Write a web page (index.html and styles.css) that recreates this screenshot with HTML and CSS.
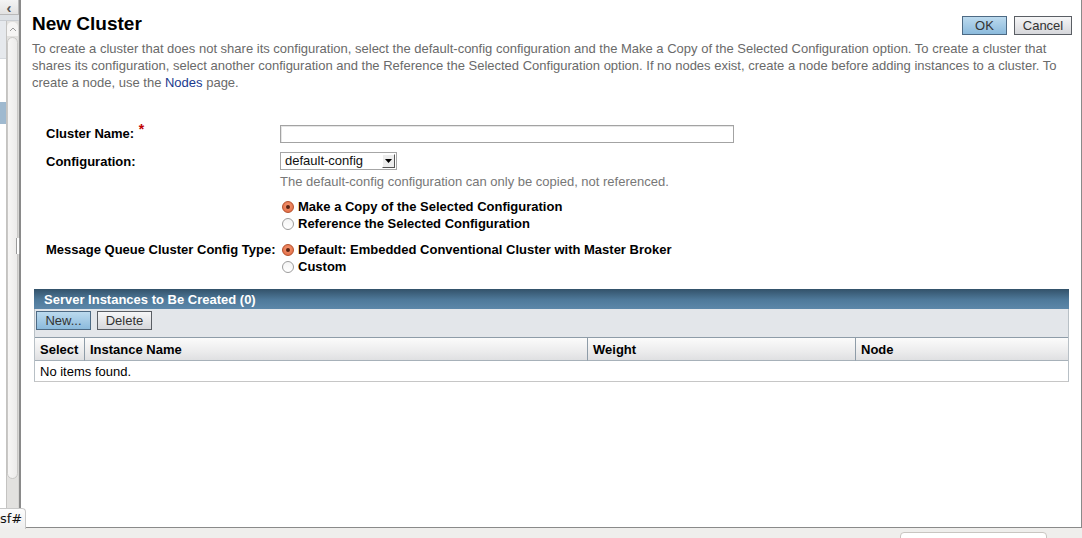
FILE: index.html
```html
<!DOCTYPE html>
<html>
<head>
<meta charset="utf-8">
<title>New Cluster</title>
<link rel="stylesheet" href="styles.css">
</head>
<body>
<div class="app">
  <div class="workspace">
    <aside class="sidebar">
      <div class="side-main">
        <div class="collapse-bar"><span class="collapse-btn">&#8249;</span></div>
        <div class="side-body">
          <div class="side-panel">
            <div class="tree-head"></div>
            <div class="tree-sel"></div>
          </div>
          <div class="scrollbar">
            <div class="scroll-up">
              <svg width="8" height="5" viewBox="0 0 8 5"><path d="M1 4 L4 1 L7 4" fill="none" stroke="#9a9a9a" stroke-width="1"/></svg>
            </div>
            <div class="scroll-thumb"></div>
          </div>
        </div>
      </div>
      <div class="splitter"><div class="grip"></div></div>
    </aside>

    <main class="page">
      <div class="title-row">
        <h1 class="title">New Cluster</h1>
        <div class="actions">
          <button class="btn btn-primary btn-ok">OK</button>
          <button class="btn btn-secondary btn-cancel">Cancel</button>
        </div>
      </div>
      <p class="desc">To create a cluster that does not share its configuration, select the default-config configuration and the Make a Copy of the Selected Configuration option. To create a cluster that shares its configuration, select another configuration and the Reference the Selected Configuration option. If no nodes exist, create a node before adding instances to a cluster. To create a node, use the <a class="link" href="#">Nodes</a> page.</p>

      <div class="form">
        <div class="label">Cluster Name: <span class="req">*</span></div>
        <div class="field"><div class="text-input"></div></div>

        <div class="label label-config">Configuration:</div>
        <div class="field">
          <div class="select">
            <span class="select-text">default-config</span>
            <span class="select-arrow"><svg width="7" height="4" viewBox="0 0 7 4"><path d="M0 0 H7 L3.5 4 Z" fill="#000"/></svg></span>
          </div>
          <div class="help">The default-config configuration can only be copied, not referenced.</div>
          <div class="radio-group copy-group">
            <div class="radio-row"><span class="radio checked"></span>Make a Copy of the Selected Configuration</div>
            <div class="radio-row"><span class="radio"></span>Reference the Selected Configuration</div>
          </div>
        </div>

        <div class="label label-mq">Message Queue Cluster Config Type:</div>
        <div class="field field-mq">
          <div class="radio-group">
            <div class="radio-row"><span class="radio checked"></span>Default: Embedded Conventional Cluster with Master Broker</div>
            <div class="radio-row"><span class="radio"></span>Custom</div>
          </div>
        </div>
      </div>

      <div class="table">
        <div class="table-title">Server Instances to Be Created (0)</div>
        <div class="table-toolbar">
          <button class="btn btn-primary btn-small">New...</button>
          <button class="btn btn-secondary btn-small btn-delete">Delete</button>
        </div>
        <div class="table-grid">
          <div class="th">Select</div>
          <div class="th">Instance Name</div>
          <div class="th">Weight</div>
          <div class="th th-last">Node</div>
          <div class="td-empty">No items found.</div>
        </div>
      </div>
    </main>
  </div>
  <footer class="statusbar">
    <div class="status-field"></div>
  </footer>
  <div class="sf-tab">sf#</div>
</div>
</body>
</html>
```

FILE: styles.css
```css
* { box-sizing: border-box; }

html, body {
  margin: 0;
  padding: 0;
  width: 1082px;
  height: 538px;
  overflow: hidden;
  background: #efeeec;
  font-family: "Liberation Sans", Arial, sans-serif;
  font-size: 13px;
  color: #000;
}

.app {
  position: relative;
  width: 1082px;
  height: 538px;
  display: flex;
  flex-direction: column;
}

.workspace {
  display: flex;
  height: 528px;
}

/* ---------- sidebar ---------- */
.sidebar {
  width: 21px;
  display: flex;
  flex-shrink: 0;
}

.side-main {
  width: 19px;
  display: flex;
  flex-direction: column;
  background: #fff;
}

.collapse-bar {
  height: 21px;
  background: #dde1e5;
  border-bottom: 1px solid #c9cdd2;
}

.collapse-btn {
  display: flex;
  align-items: center;
  justify-content: center;
  width: 19px;
  height: 15px;
  background: linear-gradient(#f4f4f4, #e2e2e2);
  border: 1px solid #b9b9b9;
  border-left: none;
  border-top: none;
  font-size: 15px;
  line-height: 1;
  color: #555;
  font-weight: bold;
}

.side-body {
  flex: 1;
  display: flex;
}

.side-panel {
  width: 6px;
  display: flex;
  flex-direction: column;
  background: #fff;
}

.tree-head {
  height: 38px;
  background: #e6e9ed;
  border-bottom: 1px solid #d5d9de;
}

.tree-sel {
  margin-top: 43px;
  height: 22px;
  background: #9fb9cf;
}

.scrollbar {
  width: 13px;
  background: #e2e1df;
  border-left: 1px solid #c4c3c1;
  border-right: 1px solid #d6d5d3;
  display: flex;
  flex-direction: column;
  align-items: center;
  padding-top: 1px;
}

.scroll-up {
  width: 11px;
  height: 14px;
  border-radius: 5px 5px 0 0;
  background: #f6f5f4;
  display: flex;
  align-items: center;
  justify-content: center;
}

.scroll-thumb {
  width: 11px;
  height: 442px;
  margin-top: 1px;
  border-radius: 6px;
  background: linear-gradient(90deg, #f7f6f5, #ecebea);
  border: 1px solid #c9c8c6;
}

.splitter {
  width: 2px;
  background: #8a8a8a;
  position: relative;
}

.grip {
  position: absolute;
  top: 238px;
  left: -3px;
  width: 4px;
  height: 16px;
  border-left: 1px solid #9a9a9a;
  border-right: 1px solid #9a9a9a;
  background: #fff;
}

/* ---------- main page ---------- */
.page {
  flex: 1;
  background: #fff;
  border-right: 1px solid #8a8a8a;
  border-bottom: 1px solid #8a8a8a;
  padding: 12px 12px 0 11px;
  min-width: 0;
}

.title-row {
  display: flex;
  justify-content: space-between;
  align-items: flex-start;
}

.title {
  margin: 0;
  font-size: 19px;
  line-height: 23px;
  font-weight: bold;
  color: #000;
}

.actions {
  display: flex;
  gap: 7px;
  margin-top: 4px;
  margin-right: -3px;
}

.btn {
  font-family: "Liberation Sans", Arial, sans-serif;
  font-size: 13px;
  color: #333;
  height: 19px;
  padding: 0;
  line-height: 17px;
  border-radius: 0;
  cursor: pointer;
}

.btn-primary {
  background: linear-gradient(#bcdaee, #8bbadc);
  border: 1px solid #4d6a84;
}

.btn-secondary {
  background: linear-gradient(#f6f6f7, #d6d7db);
  border: 1px solid #5a5e64;
}

.btn-ok { width: 45px; }
.btn-cancel { width: 58px; }

.desc {
  margin: 5px 0 0;
  line-height: 17px;
  color: #6a6a6a;
  font-size: 13px;
}

.link {
  color: #1a3a8e;
  text-decoration: none;
}

/* ---------- form ---------- */
.form {
  display: grid;
  grid-template-columns: 234px 1fr;
  padding-left: 14px;
  margin-top: 34px;
}

.label {
  font-weight: bold;
  line-height: 17px;
  padding-top: 0;
}

.req {
  color: #c00000;
  font-size: 14px;
  position: relative;
  top: -4px;
  margin-left: 1px;
}

.field {
  display: flex;
  flex-direction: column;
}

.text-input {
  width: 454px;
  height: 18px;
  border: 1px solid #a3a3a3;
  box-shadow: inset 1px 1px 0 #e6e6e6;
  background: #fff;
}

.label-config {
  margin-top: 9px;
  padding-top: 1px;
}

.select {
  margin-top: 9px;
  width: 117px;
  height: 18px;
  border: 1px solid #a6a6a6;
  background: #fff;
  display: flex;
  align-items: center;
  justify-content: space-between;
  padding: 0 1px 0 4px;
}

.select-text {
  font-size: 13px;
  line-height: 16px;
  color: #111;
}

.select-arrow {
  width: 13px;
  height: 14px;
  background: #ededed;
  border-top: 1px solid #fff;
  border-left: 1px solid #fff;
  border-right: 1px solid #555;
  border-bottom: 1px solid #555;
  display: flex;
  align-items: center;
  justify-content: center;
}

.help {
  margin-top: 4px;
  line-height: 16px;
  color: #777;
}

.radio-group {
  display: flex;
  flex-direction: column;
}

.copy-group {
  margin-top: 8px;
}

.radio-row {
  display: flex;
  align-items: center;
  height: 17px;
  font-weight: bold;
  margin-left: 2px;
}

.radio {
  width: 12px;
  height: 12px;
  border-radius: 50%;
  border: 1px solid #9c9c9c;
  background: linear-gradient(#f4f4f4, #fff);
  margin-right: 4px;
  flex-shrink: 0;
  position: relative;
}

.radio.checked {
  border-color: #b4512d;
  background: radial-gradient(circle at 50% 40%, #f59a75, #e0643c);
}

.radio.checked::after {
  content: "";
  position: absolute;
  left: 3px;
  top: 3px;
  width: 4px;
  height: 4px;
  border-radius: 50%;
  background: #5a2312;
}

.label-mq {
  margin-top: 9px;
}

.field-mq {
  margin-top: 9px;
}

/* ---------- table ---------- */
.table {
  margin: 14px 0 0 2px;
  border-left: 1px solid #b8c0c6;
  border-right: 1px solid #b8c0c6;
  border-bottom: 1px solid #c6c6c6;
}

.table-title {
  height: 20px;
  line-height: 21px;
  color: #fff;
  font-weight: bold;
  background: linear-gradient(#33526a, #4f7a9b 55%, #5c87a9);
  margin: 0 -1px;
  padding-left: 10px;
}

.table-toolbar {
  height: 29px;
  background: #e3e6ea;
  border-bottom: 1px solid #8e9ca8;
  display: flex;
  gap: 6px;
  padding: 2px 0 0 1px;
  align-items: flex-start;
}

.btn-small {
  width: 55px;
}

.btn-delete {
  width: 55px;
}

.table-grid {
  display: grid;
  grid-template-columns: 50px 503px 268px 1fr;
}

.th {
  height: 23px;
  line-height: 24px;
  font-weight: bold;
  padding-left: 5px;
  background: linear-gradient(#fbfbfb, #ececed 60%, #dfe0e2);
  border-right: 1px solid #8e9ca8;
  border-bottom: 1px solid #a7b1b9;
}

.th-last {
  border-right: none;
}

.td-empty {
  grid-column: 1 / -1;
  height: 20px;
  line-height: 22px;
  padding-left: 5px;
}

/* ---------- status bar ---------- */
.statusbar {
  height: 10px;
  background: #efeeec;
  display: flex;
  align-items: flex-start;
}

.status-field {
  margin: 4px 0 0 900px;
  width: 147px;
  height: 10px;
  background: #fff;
  border: 1px solid #c9c5c1;
  border-radius: 4px 4px 0 0;
}

.sf-tab {
  position: absolute;
  left: -1px;
  top: 508px;
  width: 27px;
  height: 21px;
  background: linear-gradient(#fdfdfd, #eeeeee);
  border: 1px solid #c8c8c8;
  border-bottom: none;
  border-radius: 0 4px 0 0;
  font-family: "DejaVu Sans", sans-serif;
  font-size: 13px;
  line-height: 20px;
  color: #111;
  overflow: hidden;
}
```
